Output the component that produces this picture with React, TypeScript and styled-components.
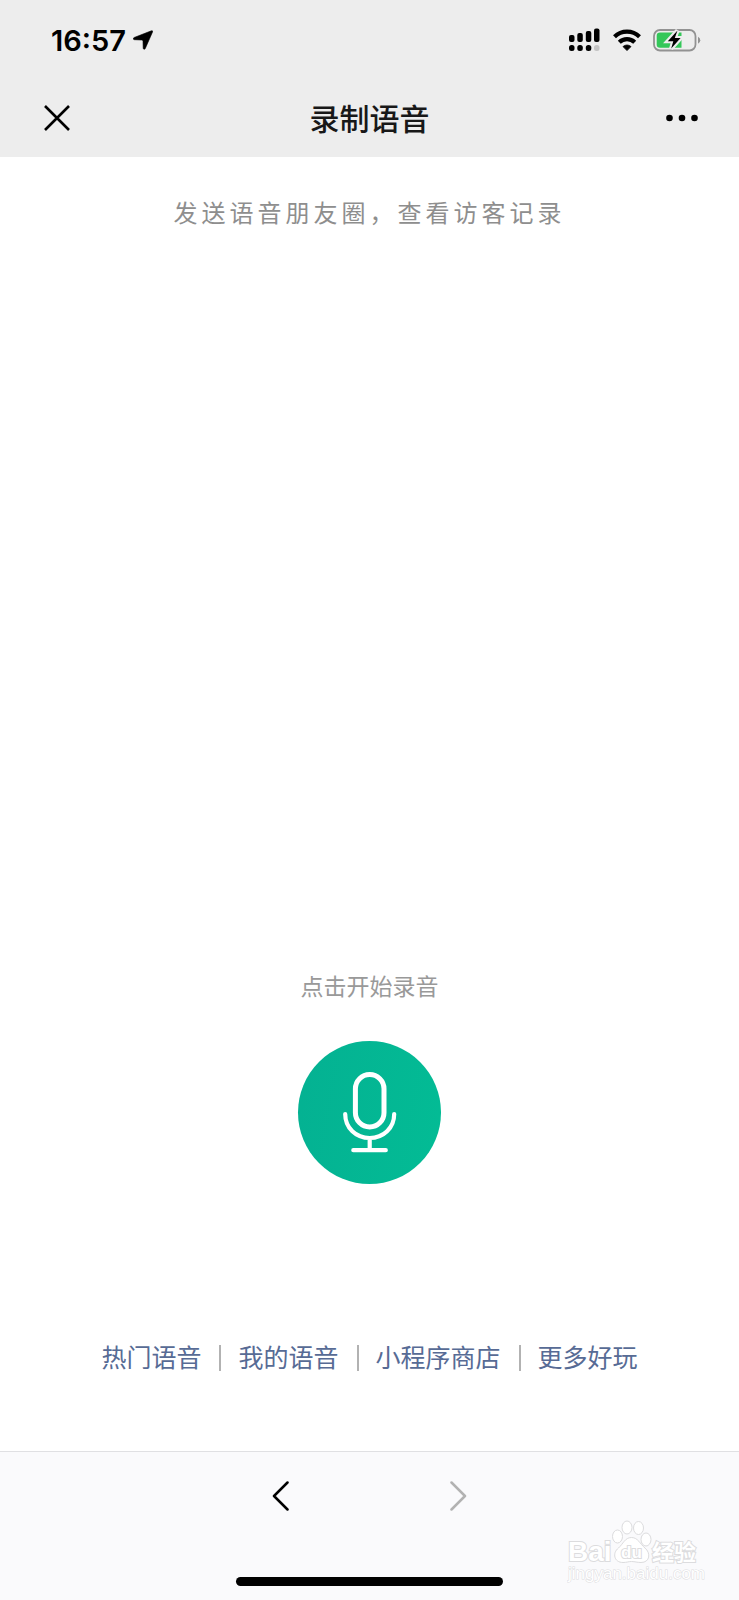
import React from "react";
import styled, { createGlobalStyle } from "styled-components";

const GlobalStyle = createGlobalStyle`
  *, *::before, *::after { box-sizing: border-box; }
  body {
    margin: 0;
    background: #ffffff;
    font-family: "Noto Sans CJK SC", "Noto Sans", sans-serif;
    -webkit-font-smoothing: antialiased;
  }
`;

const Screen = styled.div`
  display: flex;
  flex-direction: column;
  min-height: 100vh;
`;

const Header = styled.header`
  background: #ededed;
`;

const StatusBar = styled.div`
  display: flex;
  align-items: center;
  justify-content: space-between;
  height: 80px;
  padding: 0 38px 0 51px;
`;

const StatusGroup = styled.div<{ $gap: number }>`
  display: flex;
  align-items: center;
  gap: ${(p) => p.$gap}px;
`;

const Clock = styled.time`
  padding-top: 2px;
  font-family: Inter, sans-serif;
  font-size: 29px;
  line-height: 32px;
  font-weight: 600;
  color: #000000;
`;

const NavBar = styled.div`
  display: grid;
  grid-template-columns: 56px 1fr 56px;
  align-items: center;
  height: 77px;
  padding: 0 29px 2px;
`;

const Title = styled.h1`
  margin: 0;
  padding-bottom: 2px;
  font-size: 30px;
  line-height: 40px;
  font-weight: 500;
  text-align: center;
  color: #181818;
`;

const IconButton = styled.button<{ $faded?: boolean }>`
  display: flex;
  align-items: center;
  justify-content: center;
  width: 56px;
  height: 56px;
  padding: 0;
  border: 0;
  background: none;
  color: ${(p) => (p.$faded ? "#b2b2b2" : "#000000")};
  cursor: ${(p) => (p.$faded ? "default" : "pointer")};
`;

const Main = styled.main`
  flex: 1;
  display: flex;
  flex-direction: column;
  align-items: center;
  padding: 35px 16px 75px;
`;

const Intro = styled.p`
  margin: 0 0 auto;
  font-size: 24px;
  line-height: 40px;
  letter-spacing: 4px;
  color: #8e8e8e;
`;

const Recorder = styled.section`
  display: flex;
  flex-direction: column;
  align-items: center;
  gap: 40px;
  margin-bottom: 152px;
`;

const Hint = styled.label`
  font-size: 23px;
  line-height: 32px;
  color: #999999;
`;

const RecordButton = styled.button`
  display: flex;
  align-items: center;
  justify-content: center;
  width: 143px;
  height: 143px;
  padding: 0;
  border: 0;
  border-radius: 50%;
  background: linear-gradient(100deg, #04b192, #03bc95);
  color: #ffffff;
  cursor: pointer;
`;

const Links = styled.nav`
  display: flex;
  align-items: center;
`;

const NavLink = styled.a`
  font-size: 25px;
  line-height: 40px;
  color: #576b95;
  text-decoration: none;

  & + & {
    display: flex;
    align-items: center;
  }

  & + &::before {
    content: "";
    width: 2px;
    height: 26px;
    margin: 4px 17px 0 18px;
    background: #b2b2b2;
  }
`;

const Footer = styled.footer`
  position: relative;
  display: flex;
  flex-direction: column;
  align-items: center;
  border-top: 1px solid #e0e0e3;
  background: #fafafc;
  padding: 16px 0 14px;
`;

const Pager = styled.div`
  display: flex;
  gap: 122px;
  margin-bottom: 53px;
`;

const HomeIndicator = styled.div`
  width: 36%;
  height: 9px;
  border-radius: 5px;
  background: #000000;
`;

const Watermark = styled.svg`
  position: absolute;
  right: 32px;
  bottom: 10px;
`;

const LINKS = ["热门语音", "我的语音", "小程序商店", "更多好玩"];

function LocationArrow() {
  return (
    <svg width="20" height="20" viewBox="0 0 20 20" aria-hidden="true">
      <path
        d="M18.4.8 1.200 7.500C-.2 8.200 0 9.600 1.400 9.700L8.800 10Q9.900 10.100 10 11.200L10.200 18.200C10.300 19.500 11.700 19.700 12.300 18.400L19.500 2Q20 .3 18.4.8Z"
        fill="#000"
        stroke="#000"
        strokeWidth=".6"
      />
    </svg>
  );
}

function SignalIcon() {
  return (
    <svg width="32" height="24" viewBox="0 0 32 24" aria-label="信号">
      <rect x="0" y="7" width="5.500" height="7" rx="2" />
      <rect x="8.300" y="5" width="5.500" height="9" rx="2" />
      <rect x="16.800" y="3" width="5.500" height="11" rx="2" />
      <rect x="25" y="0.500" width="5.500" height="13.500" rx="2" />
      <rect x="0" y="17" width="5.500" height="6" rx="2.500" />
      <rect x="8.300" y="17" width="5.500" height="6" rx="2.500" />
      <rect x="16.800" y="17" width="5.500" height="6" rx="2.500" />
      <rect x="25" y="17" width="5.500" height="6" rx="2.500" fill="#c4c4c4" />
    </svg>
  );
}

function WifiIcon() {
  return (
    <svg width="28" height="22" viewBox="0 0 28 22" aria-label="无线网络">
      <g fill="none" stroke="#000" strokeWidth="4.200">
        <path d="M1.500 7.700a18 18 0 0 1 25 0" />
        <path d="M6.300 13.300a11 11 0 0 1 15.400 0" />
      </g>
      <path d="M14 21.600 10 17.600a5.800 5.800 0 0 1 8 0Z" stroke="#000" strokeWidth=".8" strokeLinejoin="round" />
    </svg>
  );
}

function BatteryIcon() {
  const bolt = "M24.500 2.500 14.800 13.200H20.300L18.200 20.500 27.600 10H21.800Z";
  return (
    <svg width="48" height="24" viewBox="0 0 48 24" aria-label="电池充电中">
      <rect x="1" y="2" width="41.500" height="20.500" rx="6" fill="none" stroke="#929292" strokeWidth="1.800" />
      <path d="M45 8.700q2.300 1 2.300 3.500t-2.300 3.500Z" fill="#929292" />
      <path d="M7 4.500H28.500V19.800H7Q3.700 19.800 3.700 16.500V7.800Q3.700 4.500 7 4.500Z" fill="#34c759" />
      <path d={bolt} fill="#000" stroke="#ededed" strokeWidth="4.200" strokeLinejoin="miter" />
      <path d={bolt} fill="#000" />
    </svg>
  );
}

function CloseIcon() {
  return (
    <svg width="26" height="26" viewBox="0 0 26 26" aria-hidden="true">
      <path d="M1 1 25 25M25 1 1 25" stroke="currentColor" strokeWidth="2.600" />
    </svg>
  );
}

function MoreIcon() {
  return (
    <svg width="32" height="8" viewBox="0 0 32 8" fill="currentColor" aria-hidden="true">
      <circle cx="3.500" cy="4" r="3.300" />
      <circle cx="16" cy="4" r="3.300" />
      <circle cx="28.500" cy="4" r="3.300" />
    </svg>
  );
}

function MicIcon() {
  return (
    <svg
      width="54"
      height="81"
      viewBox="0 0 54 81"
      fill="none"
      stroke="currentColor"
      strokeWidth="4.200"
      strokeLinecap="round"
      aria-hidden="true"
    >
      <rect x="12.400" y="2.500" width="28.600" height="52.500" rx="14.300" strokeWidth="5" />
      <path d="M2.200 42C2.200 56 13 66 26.700 66S51.200 56 51.200 42M26.700 66v12M10.300 78.200h32.500" />
    </svg>
  );
}

function Chevron({ forward }: { forward?: boolean }) {
  return (
    <svg width="17" height="30" viewBox="0 0 17 30" fill="none" aria-hidden="true">
      <path
        d={forward ? "M1.500 1.500 15 15 1.500 28.500" : "M15.500 1.500 2 15 15.500 28.500"}
        stroke="currentColor"
        strokeWidth="2.500"
        strokeLinecap="round"
        strokeLinejoin="round"
      />
    </svg>
  );
}

function BaiduMark() {
  return (
    <Watermark width="140" height="70" viewBox="0 0 140 70" fill="#fff" stroke="#dcdcde" strokeWidth="1">
      <ellipse cx="50.500" cy="16.500" rx="5" ry="6.500" />
      <ellipse cx="60" cy="7.500" rx="5" ry="6.500" />
      <ellipse cx="71.500" cy="8" rx="5" ry="6.500" />
      <ellipse cx="79" cy="19.500" rx="5" ry="6.500" />
      <path d="M64.500 17.500C58 17.500 56 24 51.500 28C45 33 47 42.500 56 42.500C60 42.500 61 41.500 64.500 41.500S70 42.500 74 42.500C83 42.500 84 33 78 28C73 24 71 17.500 64.500 17.500Z" />
      <g strokeWidth="2" paintOrder="stroke" fontFamily="Liberation Sans">
        <text x="1" y="41" fontWeight="700" fontSize="28">Bai</text>
        <text x="54" y="38" fontWeight="700" fontSize="17">du</text>
        <text x="85" y="40" fontFamily="Noto Sans CJK SC" fontWeight="700" fontSize="22">经验</text>
        <text x="1" y="59" fontSize="17" strokeWidth="1">jingyan.baidu.com</text>
      </g>
    </Watermark>
  );
}

export default function App() {
  return (
    <Screen>
      <GlobalStyle />
      <Header>
        <StatusBar>
          <StatusGroup $gap={7}>
            <Clock>16:57</Clock>
            <LocationArrow />
          </StatusGroup>
          <StatusGroup $gap={12}>
            <SignalIcon />
            <WifiIcon />
            <BatteryIcon />
          </StatusGroup>
        </StatusBar>
        <NavBar>
          <IconButton type="button" aria-label="关闭">
            <CloseIcon />
          </IconButton>
          <Title>录制语音</Title>
          <IconButton type="button" aria-label="更多">
            <MoreIcon />
          </IconButton>
        </NavBar>
      </Header>
      <Main>
        <Intro>发送语音朋友圈，查看访客记录</Intro>
        <Recorder>
          <Hint htmlFor="record">点击开始录音</Hint>
          <RecordButton id="record" type="button">
            <MicIcon />
          </RecordButton>
        </Recorder>
        <Links>
          {LINKS.map((label) => (
            <NavLink key={label} href="#">
              {label}
            </NavLink>
          ))}
        </Links>
      </Main>
      <Footer>
        <Pager>
          <IconButton type="button" aria-label="后退">
            <Chevron />
          </IconButton>
          <IconButton type="button" aria-label="前进" $faded disabled>
            <Chevron forward />
          </IconButton>
        </Pager>
        <HomeIndicator />
        <BaiduMark />
      </Footer>
    </Screen>
  );
}
